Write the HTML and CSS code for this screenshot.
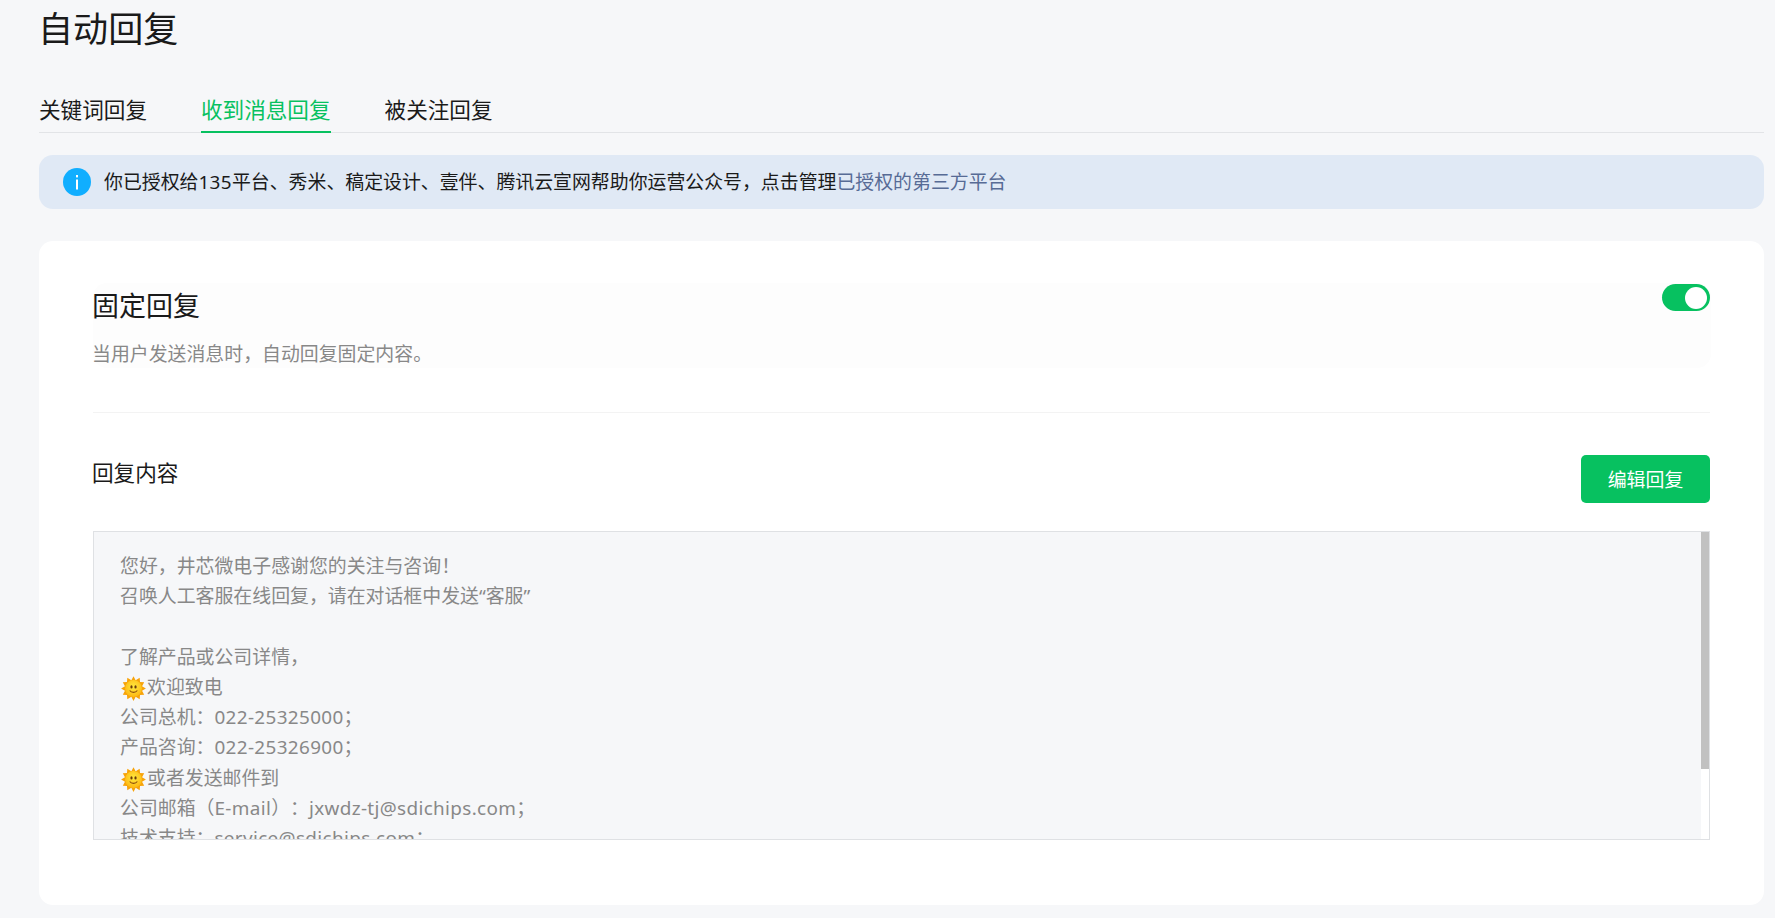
FILE: index.html
```html
<!DOCTYPE html>
<html lang="zh-CN">
<head>
    <meta charset="UTF-8">
    <title>自动回复</title>
    <link rel="stylesheet" href="styles.css">
</head>
<body>
    <div class="page">
        <h1 class="page-title">自动回复</h1>

        <div class="tabs">
            <a class="tab">关键词回复</a>
            <a class="tab active">收到消息回复</a>
            <a class="tab">被关注回复</a>
        </div>

        <div class="notice">
            <svg class="notice-icon" width="28" height="28" viewBox="0 0 28 28">
                <circle cx="14" cy="14" r="14" fill="#10aeff"></circle>
                <rect x="13" y="7" width="2" height="2.4" fill="#fff"></rect>
                <rect x="13" y="11.5" width="2" height="10" fill="#fff"></rect>
            </svg>
            <p>你已授权给<span class="latin">135</span>平台、秀米、稿定设计、壹伴、腾讯云宣网帮助你运营公众号，点击管理<a class="link">已授权的第三方平台</a></p>
        </div>

        <div class="card">
            <div class="reply-head">
                <div class="reply-text">
                    <h2 class="reply-title">固定回复</h2>
                    <p class="reply-desc">当用户发送消息时，自动回复固定内容。</p>
                </div>
                <div class="switch"><span class="switch-knob"></span></div>
            </div>

            <div class="content-head">
                <h3 class="content-title">回复内容</h3>
                <button class="edit-button">编辑回复</button>
            </div>

            <div class="content-box">
                <div class="content-text">
                    <p>您好，井芯微电子感谢您的关注与咨询！</p>
                    <p>召唤人工客服在线回复，请在对话框中发送“客服”</p>
                    <p>&nbsp;</p>
                    <p>了解产品或公司详情，</p>
                    <p><svg class="sun" width="27" height="27" viewBox="0 0 24 24"><use href="#sun-face"></use></svg>欢迎致电</p>
                    <p>公司总机：<span class="latin">022-25325000</span>；</p>
                    <p>产品咨询：<span class="latin">022-25326900</span>；</p>
                    <p><svg class="sun" width="27" height="27" viewBox="0 0 24 24"><use href="#sun-face"></use></svg>或者发送邮件到</p>
                    <p>公司邮箱（<span class="latin">E-mail</span>）：<span class="latin">jxwdz-tj@sdichips.com</span>；</p>
                    <p>技术支持：<span class="latin">service@sdichips.com</span>；</p>
                </div>
                <div class="scrollbar"><div class="scrollbar-thumb"></div></div>
            </div>
        </div>
    </div>

    <svg class="defs" width="0" height="0">
        <defs>
            <radialGradient id="sun-fill" cx="50%" cy="40%" r="60%">
                <stop offset="0" stop-color="#ffe93f"></stop>
                <stop offset="1" stop-color="#fdb813"></stop>
            </radialGradient>
            <g id="sun-face">
                <polygon fill="#f7a30a" points="12,1 13.9,4.6 17.5,2.5 17.8,6.3 21.5,6.5 19.6,9.9 23,12 19.6,14.1 21.5,17.5 17.8,17.7 17.5,21.5 13.9,19.4 12,23 10.1,19.4 6.5,21.5 6.2,17.7 2.5,17.5 4.4,14.1 1,12 4.4,9.9 2.5,6.5 6.2,6.3 6.5,2.5 10.1,4.6"></polygon>
                <circle cx="12" cy="12" r="7.5" fill="url(#sun-fill)"></circle>
                <ellipse cx="10.2" cy="10.6" rx="1" ry="1.5" fill="#6b3a0a"></ellipse>
                <ellipse cx="13.8" cy="10.6" rx="1" ry="1.5" fill="#6b3a0a"></ellipse>
                <path d="M8.6 13.8c1.6 2.2 5.2 2.2 6.8 0" fill="none" stroke="#8a4b0c" stroke-width="1"></path>
            </g>
        </defs>
    </svg>
</body>
</html>
```

FILE: styles.css
```css
* {
    margin: 0;
    padding: 0;
    box-sizing: border-box;
}

body {
    height: 918px;
    overflow: hidden;
    background-color: #f6f7f9;
    font-family: "Noto Sans", "Noto Sans CJK SC", sans-serif;
    font-size: 18.9px;
    color: #1a1a1a;
    text-spacing-trim: space-all;
}

.latin {
    letter-spacing: 0.35px;
}

.page {
    padding: 0 11px 0 39px;
}

.page-title {
    height: 60px;
    margin-left: -1px;
    font-size: 35.1px;
    font-weight: 400;
    line-height: 56px;
}

.tabs {
    display: flex;
    gap: 54px;
    height: 73px;
    padding-top: 30px;
    border-bottom: 1px solid #e2e4e7;
}

.tab {
    height: 43px;
    font-size: 21.6px;
    line-height: 40px;
    color: #1a1a1a;
}

.tab.active {
    color: #07c160;
    border-bottom: 2px solid #07c160;
}

.notice {
    display: flex;
    align-items: center;
    gap: 13px;
    height: 54px;
    margin-top: 22px;
    padding-left: 24px;
    background-color: #e0e9f5;
    border-radius: 14px;
}

.notice p {
    padding-bottom: 2px;
}

.link {
    color: #576b95;
}

.card {
    height: 664px;
    margin-top: 32px;
    padding: 42px 54px 0;
    background-color: #fff;
    border-radius: 14px;
}

.reply-head {
    display: flex;
    justify-content: space-between;
    align-items: flex-start;
    height: 130px;
    border-bottom: 1px solid #f3f3f3;
    position: relative;
}

.reply-head::before {
    content: "";
    position: absolute;
    left: 0;
    right: -1px;
    top: 0;
    height: 85px;
    background-color: #fdfdfd;
    border-radius: 14px;
}

.reply-head > * {
    position: relative;
}

.reply-text {
    padding-top: 1px;
    margin-left: -1px;
}

.reply-title {
    font-size: 27px;
    font-weight: 400;
    line-height: 44px;
    margin-bottom: 11px;
}

.reply-desc {
    line-height: 30px;
    color: #888;
}

.switch {
    display: flex;
    justify-content: flex-end;
    align-items: center;
    width: 48px;
    height: 27px;
    padding-right: 3px;
    margin-top: 1px;
    background-color: #07c160;
    border-radius: 14px;
}

.switch-knob {
    width: 22px;
    height: 22px;
    background-color: #fff;
    border-radius: 50%;
}

.content-head {
    display: flex;
    justify-content: space-between;
    align-items: flex-start;
    height: 118px;
    padding-top: 42px;
}

.content-title {
    margin-left: -1px;
    font-size: 21.6px;
    font-weight: 400;
    line-height: 36px;
}

.edit-button {
    width: 129px;
    height: 48px;
    background-color: #07c160;
    color: #fff;
    border: none;
    border-radius: 5px;
    font-family: inherit;
    font-size: 18.9px;
}

.content-box {
    display: flex;
    height: 309px;
    overflow: hidden;
    background-color: #fff;
    border: 1px solid #dfe1e4;
}

.content-text {
    flex: 1;
    padding: 19px 26px;
    background-color: #f6f7f9;
    color: #888;
    line-height: 30.24px;
}

.sun {
    vertical-align: -8px;
}

.scrollbar {
    width: 8px;
}

.scrollbar-thumb {
    height: 237px;
    background-color: #c1c1c1;
}

.defs {
    position: absolute;
}
```
